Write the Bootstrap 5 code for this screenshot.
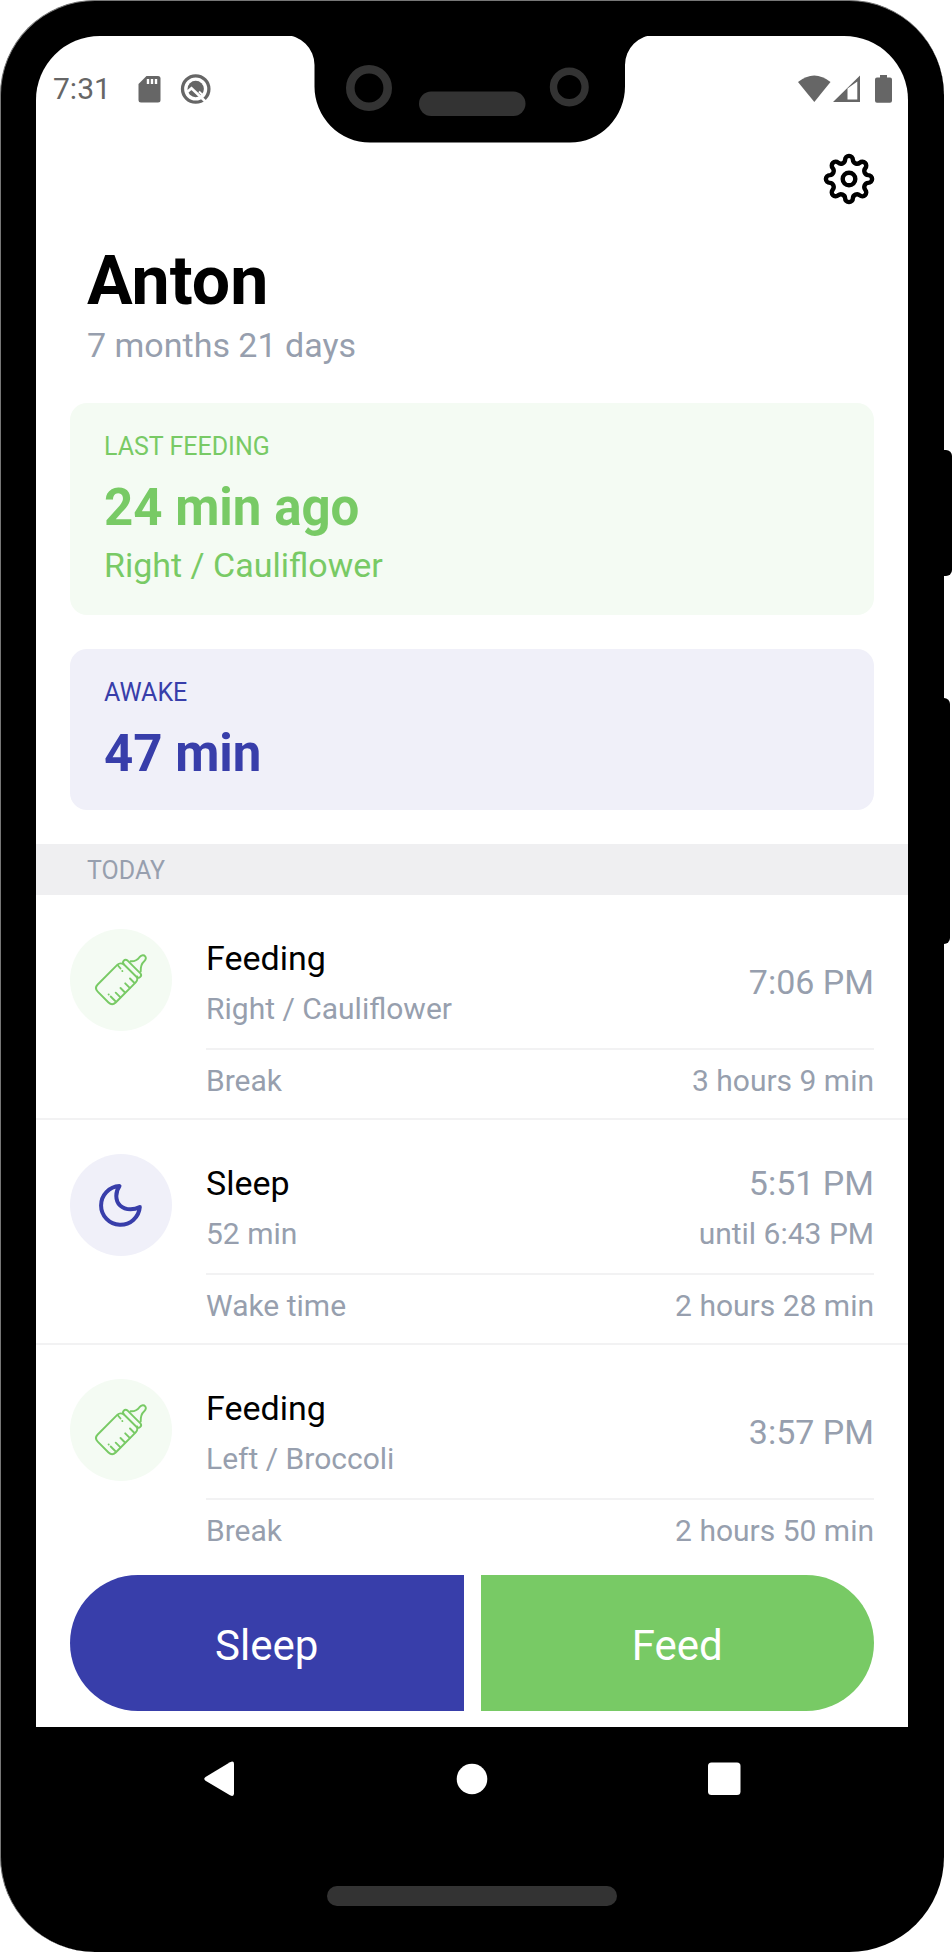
<!DOCTYPE html>
<html lang="en">
<head>
<meta charset="utf-8">
<meta name="viewport" content="width=device-width, initial-scale=1">
<title>Anton – baby tracker</title>
<link rel="stylesheet" href="https://cdn.jsdelivr.net/npm/bootstrap@5.3.0/dist/css/bootstrap.min.css">
<style>
  :root {
    --feed: #78ca65;
    --feed-soft: #f4fbf3;
    --sleep: #383eaa;
    --sleep-soft: #f0f0f9;
    --muted: #979fae;
    --line: #f2f2f3;
    --edge: 34px;
  }
  body { font-family: Roboto, "Liberation Sans", sans-serif; color: #000; background: #fff; }
  svg { display: block; }

  /* Phone body */
  .phone {
    min-width: 0;
    background: #000;
    border: solid #777;
    border-width: 1px 0 0 1px;
    border-radius: 95px;
    padding: 35px 36px 46px 35px;
  }
  .side-rail { width: 8px; padding-top: 450px; gap: 122px; }
  .side-key { background: #000; border-radius: 0 6px 6px 0; }
  .power-key { width: 8px; height: 126px; }
  .volume-key { width: 6px; height: 246px; }
  .notch { top: 0; left: 50%; transform: translateX(-50%); }
  .screen { background: #fff; border-radius: 64px 64px 0 0; padding-bottom: 16px; }

  /* Status bar and title */
  .status-bar { padding: 34px 15px 0 17px; line-height: 38px; font-size: 30px; color: #666; }
  .status-start { gap: 22px; }
  .status-icons { gap: 11px; }
  .edge-x { padding-left: var(--edge); padding-right: var(--edge); }
  .gear-row { padding-top: 46px; padding-bottom: 37px; }
  .plain-btn { background: none; border: 0; padding: 0; }
  .heading { padding: 0 51px 34px; }
  .child-name { font-size: 68px; line-height: 80px; font-weight: 700; margin: 0; }
  .child-age { font-size: 34px; line-height: 48px; margin: 0; }
  .text-soft { color: var(--muted); }

  /* Summary cards */
  .cards { gap: 34px; padding-bottom: 34px; }
  .summary { border: 0; border-radius: 17px; padding: 27px 34px 24px; }
  .summary h2 { font-size: 25px; line-height: 34px; font-weight: 400; margin: 0 0 12px; }
  .summary .amount { font-size: 51px; line-height: 64px; font-weight: 700; margin: 0; }
  .summary .detail { font-size: 34px; line-height: 51px; margin: 0; }
  .feed-tone { background: var(--feed-soft); color: var(--feed); }
  .sleep-tone { background: var(--sleep-soft); color: var(--sleep); }

  /* Day list */
  .day-label { background: #efeff1; font-size: 25px; line-height: 49px; font-weight: 400; padding: 2px 51px 0; margin: 0; }
  .entry { padding-top: 34px; padding-bottom: 6px; gap: 34px; border-bottom: 2px solid var(--line); }
  .entry:last-child { border-bottom: 0; }
  .entry-icon { width: 102px; height: 102px; }
  .entry-main { padding: 2px 0 15px; border-bottom: 2px solid var(--line); }
  .entry-title { font-size: 34px; line-height: 54px; font-weight: 400; margin: 0; }
  .entry-sub { font-size: 30px; line-height: 48px; margin: 0; }
  .entry-foot { font-size: 30px; line-height: 62px; }

  /* Actions and system navigation */
  .actions { gap: 17px; padding-top: 7px; }
  .action {
    --bs-btn-color: #fff; --bs-btn-hover-color: #fff; --bs-btn-active-color: #fff;
    --bs-btn-font-size: 42px; --bs-btn-line-height: 50px;
    --bs-btn-border-width: 0; --bs-btn-padding-x: 0; --bs-btn-border-radius: 0;
    padding-top: 46px; padding-bottom: 40px;
  }
  .action-sleep { --bs-btn-bg: var(--sleep); --bs-btn-hover-bg: #2f3594; --bs-btn-active-bg: #2f3594; border-radius: 68px 0 0 68px; }
  .action-feed { --bs-btn-bg: var(--feed); --bs-btn-hover-bg: #67ba54; --bs-btn-active-bg: #67ba54; border-radius: 0 68px 68px 0; }
  .system-nav { padding: 32px 56px 87px; }
  .chin-bar { height: 20px; background: #333; }
</style>
</head>
<body>
<svg class="d-none" aria-hidden="true">
  <symbol id="bottle" viewBox="0 0 102 102">
    <g fill="none" stroke="#78ca65" stroke-width="1.9" stroke-linecap="round" stroke-linejoin="round">
      <path d="M54 35.500C51.500 34 49 34.200 47.500 35.700L27.700 55.500C25.500 57.700 25.500 60.500 27.700 62.700L38.500 73.500C40.700 75.700 43.500 75.700 45.700 73.500L65.500 53.700C67 52 67.800 50 67.200 47.500"/>
      <path d="M54 35.500C51.500 33 54.700 29.200 57.600 31.600L70.400 44.400C72.500 46.700 69.300 50.300 66.600 48Z"/>
      <path d="M60.500 32.200C65.500 32.500 67.500 31 69.500 28.200C71.500 25.600 74.200 26 75 27.200C76.200 28.600 76 30.500 74.200 32.200C71.500 34.500 70.500 37 70.700 42.500"/>
      <path d="M60 49.500L64.500 54M55.200 54.300L59.700 58.800M50.500 59L55 63.500M45.700 63.700L50.200 68.200M40.700 67.500L45.200 72M38.600 65.400L38.700 65.500M48 36.500L50.500 39.500M52.300 42L52.400 42.100"/>
    </g>
  </symbol>
  <symbol id="moon" viewBox="0 0 102 102">
    <path d="M49.500 32A19.400 19.400 0 1 0 69.800 53C66 55 63 55.300 60.500 55.300C52 55.300 46.300 50 46.300 42C46.300 38 47.300 35 49.500 32Z" fill="none" stroke="#383eaa" stroke-width="4" stroke-linejoin="round"/>
  </symbol>
</svg>

<div class="d-flex">
  <div class="phone flex-fill">
    <main class="screen position-relative">
      <svg class="notch position-absolute" width="376" height="107" viewBox="284 36 376 107" aria-hidden="true">
        <path d="M284 35A30.500 30 0 0 1 314.500 65V86A55.500 56 0 0 0 370 142.500H570A55 56 0 0 0 625 86V65A30 30 0 0 1 655 35Z"/>
        <g fill="none" stroke="#333">
          <circle cx="369" cy="88" r="18.700" stroke-width="8.600"/>
          <circle cx="569.300" cy="87" r="15.800" stroke-width="7.400"/>
        </g>
        <rect x="419" y="91.500" width="106.500" height="24.500" rx="12.200" fill="#333"/>
      </svg>

      <div class="status-bar d-flex justify-content-between align-items-center">
        <div class="status-start d-flex align-items-center">
          <span>7:31</span>
          <div class="status-icons d-flex">
            <svg width="34" height="30" viewBox="133 73 34 30" fill="#666" aria-label="SD card">
              <path d="M146.500 75H158Q160.500 75 160.500 77.500V99Q160.500 101.500 158 101.500H141Q138.500 101.500 138.500 99V83Z"/>
              <path d="M146.800 78h2.400v5h-2.400zM150.800 78h2.400v5h-2.400zM154.800 78h2.400v5h-2.400z" fill="#fff"/>
            </svg>
            <svg width="34" height="30" viewBox="178 73 34 30" aria-label="Sync">
              <circle cx="195.700" cy="88" r="13.200" fill="none" stroke="#666" stroke-width="3.300"/>
              <circle cx="195.700" cy="88" r="8.200" fill="#666"/>
              <path d="M186 92L191.500 87.200L206.500 101.500" fill="none" stroke="#fff" stroke-width="2.600"/>
              <path d="M199 90.500L204 95.500" stroke="#fff" stroke-width="2"/>
            </svg>
          </div>
        </div>
        <svg width="96" height="30" viewBox="797 73 96 30" fill="#666" aria-label="Wi-Fi, signal, battery">
          <path d="M798 81Q814.300 68 830.500 81L814.300 101Z"/>
          <path d="M833 101L860 74.500V101ZM847.500 87.500V98.500H857.300V80.500Z" fill-rule="evenodd"/>
          <path d="M880 74H887V76.500H890Q892 76.500 892 78.500V99.700Q892 101.700 890 101.700H877Q875 101.700 875 99.700V78.500Q875 76.500 877 76.500H880Z"/>
        </svg>
      </div>

      <div class="gear-row edge-x d-flex justify-content-end">
        <button class="plain-btn" type="button" aria-label="Settings">
          <svg width="50" height="50" viewBox="-25 -25 50 50" fill="none" stroke="#000" stroke-width="4.400" overflow="visible">
            <path d="M-3.900-19.200A3.900 3.900 0 0 1 3.900-19.200A4.200 4.200 0 0 0 10.800-16.300A3.900 3.900 0 0 1 16.300-10.800A4.200 4.200 0 0 0 19.200-3.900A3.900 3.900 0 0 1 19.200 3.900A4.200 4.200 0 0 0 16.300 10.800A3.900 3.900 0 0 1 10.800 16.300A4.200 4.200 0 0 0 3.900 19.200A3.900 3.900 0 0 1-3.900 19.200A4.200 4.200 0 0 0-10.800 16.300A3.900 3.900 0 0 1-16.300 10.800A4.200 4.200 0 0 0-19.200 3.900A3.900 3.900 0 0 1-19.200-3.900A4.200 4.200 0 0 0-16.300-10.800A3.900 3.900 0 0 1-10.800-16.300A4.200 4.200 0 0 0-3.900-19.200Z"/>
            <circle r="6.300"/>
          </svg>
        </button>
      </div>

      <header class="heading">
        <h1 class="child-name">Anton</h1>
        <p class="child-age text-soft">7 months 21 days</p>
      </header>

      <div class="cards edge-x d-flex flex-column">
        <section class="card summary feed-tone">
          <h2 class="text-uppercase">Last feeding</h2>
          <p class="amount">24 min ago</p>
          <p class="detail">Right / Cauliflower</p>
        </section>
        <section class="card summary sleep-tone">
          <h2 class="text-uppercase">Awake</h2>
          <p class="amount">47 min</p>
        </section>
      </div>

      <h2 class="day-label text-soft text-uppercase">Today</h2>
      <ul class="list-unstyled mb-0">
        <li class="entry edge-x d-flex align-items-start">
          <div class="entry-icon feed-tone rounded-circle flex-shrink-0"><svg width="102" height="102" aria-hidden="true"><use href="#bottle"/></svg></div>
          <div class="flex-fill text-soft">
            <div class="entry-main d-flex justify-content-between align-items-center">
              <div><h3 class="entry-title text-black">Feeding</h3><p class="entry-sub">Right / Cauliflower</p></div>
              <div class="text-end"><p class="entry-title">7:06 PM</p></div>
            </div>
            <div class="entry-foot d-flex justify-content-between"><span>Break</span><span>3 hours 9 min</span></div>
          </div>
        </li>
        <li class="entry edge-x d-flex align-items-start">
          <div class="entry-icon sleep-tone rounded-circle flex-shrink-0"><svg width="102" height="102" aria-hidden="true"><use href="#moon"/></svg></div>
          <div class="flex-fill text-soft">
            <div class="entry-main d-flex justify-content-between align-items-center">
              <div><h3 class="entry-title text-black">Sleep</h3><p class="entry-sub">52 min</p></div>
              <div class="text-end"><p class="entry-title">5:51 PM</p><p class="entry-sub">until 6:43 PM</p></div>
            </div>
            <div class="entry-foot d-flex justify-content-between"><span>Wake time</span><span>2 hours 28 min</span></div>
          </div>
        </li>
        <li class="entry edge-x d-flex align-items-start">
          <div class="entry-icon feed-tone rounded-circle flex-shrink-0"><svg width="102" height="102" aria-hidden="true"><use href="#bottle"/></svg></div>
          <div class="flex-fill text-soft">
            <div class="entry-main d-flex justify-content-between align-items-center">
              <div><h3 class="entry-title text-black">Feeding</h3><p class="entry-sub">Left / Broccoli</p></div>
              <div class="text-end"><p class="entry-title">3:57 PM</p></div>
            </div>
            <div class="entry-foot d-flex justify-content-between"><span>Break</span><span>2 hours 50 min</span></div>
          </div>
        </li>
      </ul>

      <div class="actions edge-x d-flex">
        <button type="button" class="btn action action-sleep w-50">Sleep</button>
        <button type="button" class="btn action action-feed w-50">Feed</button>
      </div>
    </main>

    <nav class="system-nav d-flex" aria-label="System">
      <button type="button" class="plain-btn flex-fill d-flex justify-content-center" aria-label="Back">
        <svg width="40" height="40" viewBox="198 1759 40 40" fill="#fff"><path d="M229 1762.200Q233 1760.200 233 1764V1793.500Q233 1797.200 229 1795.300L204.500 1780.700Q202 1778.800 204.500 1777Z"/></svg>
      </button>
      <button type="button" class="plain-btn flex-fill d-flex justify-content-center" aria-label="Home">
        <svg width="40" height="40" viewBox="0 0 40 40" fill="#fff"><circle cx="20" cy="20" r="15.300"/></svg>
      </button>
      <button type="button" class="plain-btn flex-fill d-flex justify-content-center" aria-label="Recent apps">
        <svg width="40" height="40" viewBox="0 0 40 40" fill="#fff"><rect x="3" y="3.500" width="32.500" height="32.500" rx="3.500"/></svg>
      </button>
    </nav>
    <div class="chin-bar col-4 mx-auto rounded-pill"></div>
  </div>

  <div class="side-rail d-flex flex-column flex-shrink-0" aria-hidden="true">
    <div class="side-key power-key"></div>
    <div class="side-key volume-key"></div>
  </div>
</div>
<script src="https://cdn.jsdelivr.net/npm/bootstrap@5.3.0/dist/js/bootstrap.bundle.min.js"></script>
</body>
</html>
